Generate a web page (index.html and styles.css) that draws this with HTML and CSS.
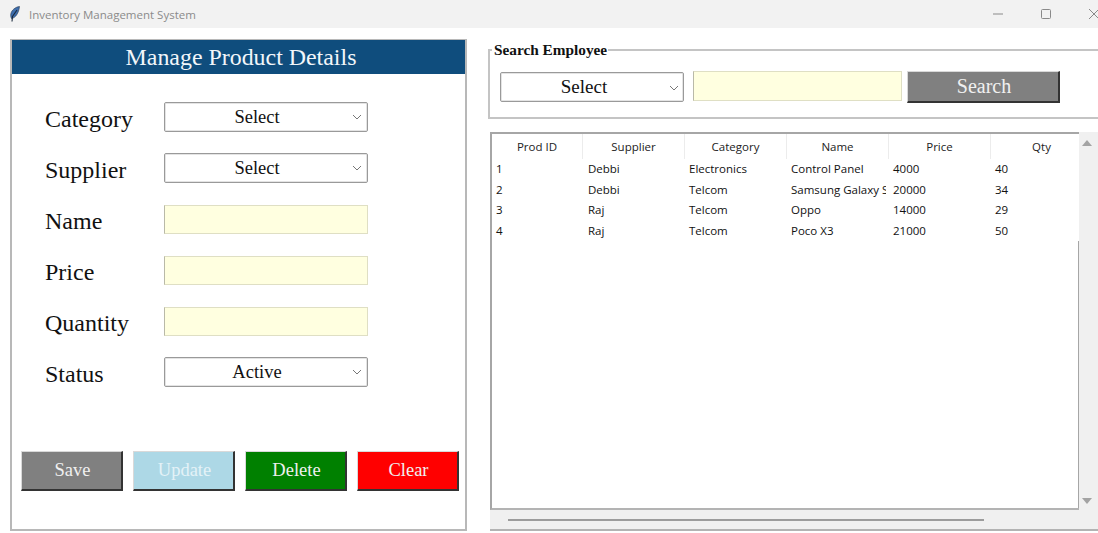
FILE: index.html
```html
<!DOCTYPE html>
<html lang="en">
<head>
<meta charset="utf-8">
<title>Inventory Management System</title>
<link rel="stylesheet" href="styles.css">
</head>
<body>
<header class="titlebar">
  <svg class="app-icon" width="12" height="16" viewBox="0 0 12 16"><path d="M10.500 .5C6.500 1 2.500 4 1.800 8c-.3 1.800 0 3.200.7 4.500C6.500 12 9.800 7 10.500 .5z" fill="#3f6fae" stroke="#25364d" stroke-width=".6"/><path d="M8 4 3.500 10.500 3 15.500" fill="none" stroke="#1b2a3f" stroke-width="1.100"/></svg>
  <span class="app-title">Inventory Management System</span>
  <div class="win-controls">
    <svg width="12" height="12" viewBox="0 0 12 12"><path d="M1 6h10" stroke="#8a8a8a"/></svg>
    <svg width="12" height="12" viewBox="0 0 12 12"><rect x="1.500" y="1.500" width="9" height="9" rx="1" fill="none" stroke="#8a8a8a"/></svg>
    <svg width="12" height="12" viewBox="0 0 12 12"><path d="M1 1l10 10M11 1 1 11" stroke="#8a8a8a"/></svg>
  </div>
</header>
<main class="content">
  <section class="panel">
    <h1 class="panel-title">Manage Product Details</h1>
    <div class="form">
      <label class="label">Category</label>
      <div class="select"><span>Select</span><svg class="chev" width="10" height="6" viewBox="0 0 10 6"><path d="M1 1l4 4 4-4" fill="none" stroke="#777"/></svg></div>
      <label class="label">Supplier</label>
      <div class="select"><span>Select</span><svg class="chev" width="10" height="6" viewBox="0 0 10 6"><path d="M1 1l4 4 4-4" fill="none" stroke="#777"/></svg></div>
      <label class="label">Name</label>
      <div class="entry"></div>
      <label class="label">Price</label>
      <div class="entry"></div>
      <label class="label">Quantity</label>
      <div class="entry"></div>
      <label class="label">Status</label>
      <div class="select"><span>Active</span><svg class="chev" width="10" height="6" viewBox="0 0 10 6"><path d="M1 1l4 4 4-4" fill="none" stroke="#777"/></svg></div>
    </div>
    <div class="actions">
      <button class="btn btn-gray">Save</button>
      <button class="btn btn-blue">Update</button>
      <button class="btn btn-green">Delete</button>
      <button class="btn btn-red">Clear</button>
    </div>
  </section>
  <section class="right">
    <fieldset class="search">
      <legend class="search-legend">Search Employee</legend>
      <div class="select select-search"><span>Select</span><svg class="chev" width="10" height="6" viewBox="0 0 10 6"><path d="M1 1l4 4 4-4" fill="none" stroke="#777"/></svg></div>
      <div class="entry entry-search"></div>
      <button class="btn btn-gray btn-search">Search</button>
    </fieldset>
    <div class="tree-wrap">
      <div class="tree-row-top">
        <div class="tree">
          <div class="tr thead"><div>Prod ID</div><div>Supplier</div><div>Category</div><div>Name</div><div>Price</div><div>Qty</div></div>
          <div class="tr"><div>1</div><div>Debbi</div><div>Electronics</div><div>Control Panel</div><div>4000</div><div>40</div></div>
          <div class="tr"><div>2</div><div>Debbi</div><div>Telcom</div><div>Samsung Galaxy S21</div><div>20000</div><div>34</div></div>
          <div class="tr"><div>3</div><div>Raj</div><div>Telcom</div><div>Oppo</div><div>14000</div><div>29</div></div>
          <div class="tr"><div>4</div><div>Raj</div><div>Telcom</div><div>Poco X3</div><div>21000</div><div>50</div></div>
          <div class="tree-fill"></div>
        </div>
        <div class="vscroll">
          <svg width="10" height="6" viewBox="0 0 10 6"><path d="M5 0l5 6H0z" fill="#a3a3a3"/></svg>
          <svg width="10" height="6" viewBox="0 0 10 6"><path d="M5 6 10 0H0z" fill="#a3a3a3"/></svg>
        </div>
      </div>
      <div class="hscroll"><div class="hthumb"></div></div>
    </div>
  </section>
</main>
</body>
</html>
```
FILE: styles.css
```css
* { box-sizing: border-box; }
html, body { margin: 0; height: 100%; }
body { width: 1098px; height: 533px; overflow: hidden; background: #fff; font-family: "Liberation Serif", serif; color: #111; }

.titlebar { height: 28px; background: #f2f2f2; display: flex; align-items: center; padding-left: 9px; font-family: "Open Sans", sans-serif; }
.app-icon { margin-right: 8px; }
.app-title { font-size: 11.500px; color: #8b8b8b; }
.win-controls { margin-left: auto; display: flex; gap: 36px; margin-right: -2px; }

.content { display: flex; align-items: flex-start; padding: 11px 0 0 10px; gap: 21px; }

.panel { width: 457px; height: 492px; border: 2px solid #b8b8b8; border-top-width: 1px; display: flex; flex-direction: column; }
.panel-title { margin: 0; height: 34px; padding-left: 5px; background: #0f4d7d; color: #f2f6fa; font-size: 23.900px; font-weight: 400; line-height: 34px; text-align: center; }

.form { display: grid; grid-template-columns: 119px 204px; grid-auto-rows: 30px; row-gap: 21px; padding: 28px 0 0 33px; align-items: center; }
.label { font-size: 24px; line-height: 30px; position: relative; top: 2px; }

.select { height: 30px; border: 1px solid #9a9a9a; box-shadow: inset 0 0 0 1px #e4e4e4; border-radius: 2px; background: #fff; display: flex; align-items: center; justify-content: center; position: relative; padding-right: 18px; font-size: 18.500px; }
.chev { position: absolute; right: 5px; top: 11px; }
.entry { height: 29px; background: #ffffe0; border: 1px solid #dfdfc4; border-left-color: #b9b9a8; }

.actions { display: grid; grid-template-columns: repeat(4, 102px); column-gap: 10px; padding: 0 0 0 9px; margin-top: 64px; }
.btn { height: 40px; border: 0; border-top: 1px solid #d9d9d9; border-left: 1px solid #d9d9d9; border-right: 2px solid #333; border-bottom: 2px solid #333; font-family: "Liberation Serif", serif; font-size: 18.500px; color: #f0f0f0; padding: 0 0 0 2px; }
.btn-gray { background: #808080; }
.btn-blue { background: #add8e6; color: #e4f2f7; }
.btn-green { background: #008000; }
.btn-red { background: #f00; }

.right { width: 610px; display: flex; flex-direction: column; }

.search { margin: 2px 0 0; height: 78px; min-width: 0; border: 2px solid #c4c4c4; border-right: 0; padding: 13px 0 0 10px; display: flex; align-items: flex-start; }
.search-legend { font-size: 15.300px; font-weight: 700; padding: 0 1px 0 2px; margin-left: -8px; line-height: 18px; }
.select-search { width: 184px; height: 30px; font-size: 19px; padding-right: 16px; flex: none; }
.select-search .chev { top: 12px; right: 4px; }
.entry-search { width: 209px; height: 30px; margin-left: 9px; margin-top: -1px; flex: none; }
.btn-search { width: 153px; height: 32px; margin-left: 5px; margin-top: -1px; font-size: 20px; flex: none; }

.tree-wrap { margin-top: 13px; margin-left: 2px; height: 399px; border-bottom: 2px solid #b3b3b3; display: flex; flex-direction: column; background: #f0f0f0; }
.tree-row-top { display: flex; height: 378px; }
.tree { width: 589px; border: 2px solid #a6a6a6; border-right: 0; border-bottom-color: #b3b3b3; background: #fff; overflow: hidden; display: flex; flex-direction: column; font-family: "Open Sans", sans-serif; font-size: 11.500px; color: #111; }
.tr { display: grid; grid-template-columns: 91px repeat(5, 102px); width: 601px; height: 20.600px; align-items: center; line-height: 20px; flex: none; }
.tr > div { padding-left: 4px; white-space: nowrap; overflow: hidden; clip-path: inset(0 3px 0 0); }
.tr > div:nth-child(2) { padding-left: 5px; }
.tr > div:nth-child(5) { clip-path: inset(0 65px 0 0); }
.thead { height: 25px; color: #222; }
.thead > div, .thead > div:nth-child(2), .thead > div:nth-child(5) { padding: 0; height: 25px; line-height: 25px; text-align: center; border-right: 1px solid #ececec; clip-path: none; }
.tree-fill { flex: 1; width: 587px; border-right: 1px solid #a6a6a6; }
.vscroll { flex: 1; display: flex; flex-direction: column; justify-content: space-between; align-items: center; padding: 8px 4px 6px 0; }
.hscroll { flex: 1; display: flex; align-items: center; padding-left: 18px; }
.hthumb { width: 476px; height: 2px; background: #9c9c9c; }
```
